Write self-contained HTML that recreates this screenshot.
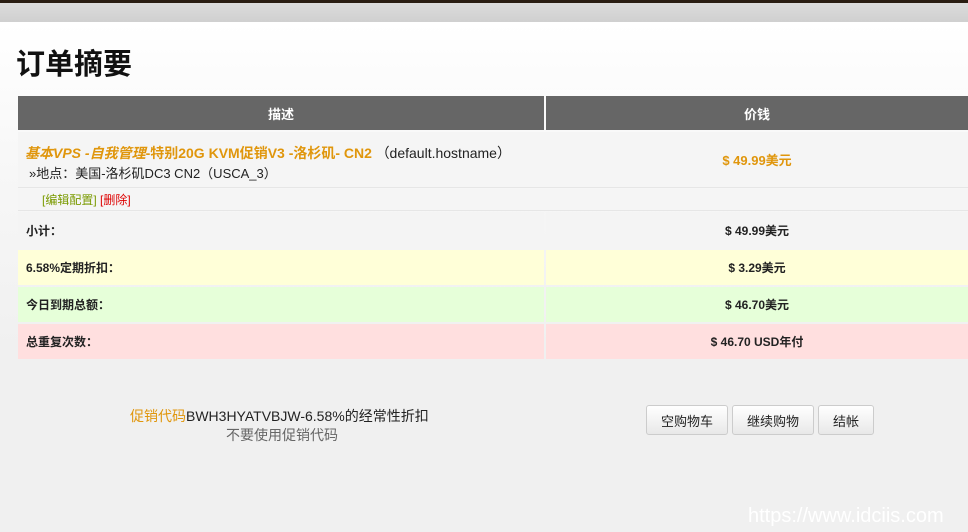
<!DOCTYPE html>
<html><head><meta charset="utf-8"><style>
*{margin:0;padding:0;box-sizing:border-box}
body{width:968px;height:532px;overflow:hidden;background:#f0f0f0;font-family:"Liberation Sans","Noto Sans CJK SC",sans-serif;font-size:13px;color:#222;position:relative}
.top{position:absolute;left:0;top:0;width:968px;height:3px;background:#2a1d12}
.band{position:absolute;left:0;top:3px;width:968px;height:20px;background:linear-gradient(#dcdcdc,#cfcfcf)}
.panel{position:absolute;left:0;top:22px;width:968px;height:510px;background:linear-gradient(#fff 0,#f7f7f7 150px,#f0f0f0 330px,#f0f0f0)}
h1{position:absolute;left:16px;top:41px;font-size:29px;font-weight:bold;color:#111}
.row{position:absolute;left:18px;width:950px;display:flex}
.row>div{display:flex;align-items:center;height:100%}
.c1{width:526px}.c2{width:422px;margin-left:2px;justify-content:center}
.hd{top:96px;height:34px;color:#fff;font-weight:bold;font-size:13px}
.hd>div{background:#666}
.hd .c1{justify-content:center}
.b{font-weight:bold;font-size:12px}
.lab{padding-left:8px}
.or{color:#e0960c}
.y>div{background:#ffffd8}.g>div{background:#e6ffd9}.r>div{background:#ffdfdf}.s>div{background:#f4f4f4}
</style></head><body>
<div class="top"></div><div class="band"></div><div class="panel"></div>
<h1>订单摘要</h1>
<div class="row hd"><div class="c1">描述</div><div class="c2">价钱</div></div>
<div class="row" style="top:132px;height:56px;background:#f5f5f5;border-bottom:1px solid #e6e6e6">
 <div class="c1" style="display:block;padding:11px 0 0 7px;line-height:20px">
  <span class="or" style="font-weight:bold;font-size:14px"><i>基本VPS -自我管理</i>-特别20G KVM促销V3 -洛杉矶- CN2</span> <span style="font-size:14px">（default.hostname）</span><br>
  <span style="padding-left:4px;font-size:13px">»地点：美国-洛杉矶DC3 CN2（USCA_3）</span></div>
 <div class="c2 or" style="font-weight:bold;font-size:13px">$ 49.99美元</div></div>
<div class="row" style="top:189px;height:22px;background:#f5f5f5;border-bottom:1px solid #e6e6e6">
 <div class="c1" style="padding-left:24px;font-size:12px"><span style="color:#7a9a00">[编辑配置]</span>&nbsp;<span style="color:#d00">[删除]</span></div></div>
<div class="row b s" style="top:212px;height:36px"><div class="c1 lab">小计：</div><div class="c2">$ 49.99美元</div></div>
<div class="row b y" style="top:250px;height:35px"><div class="c1 lab">6.58%定期折扣：</div><div class="c2">$ 3.29美元</div></div>
<div class="row b g" style="top:287px;height:35px"><div class="c1 lab">今日到期总额：</div><div class="c2">$ 46.70美元</div></div>
<div class="row b r" style="top:324px;height:35px"><div class="c1 lab">总重复次数：</div><div class="c2">$ 46.70 USD年付</div></div>
<div style="position:absolute;left:130px;top:406px;font-size:14px"><span class="or">促销代码</span>BWH3HYATVBJW-6.58%的经常性折扣</div>
<div style="position:absolute;left:226px;top:425px;font-size:14px;color:#666">不要使用促销代码</div>
<div style="position:absolute;left:646px;top:405px;display:flex;gap:4px;font-size:13px">
 <div style="width:82px;height:30px;border:1px solid #ccc;border-radius:3px;background:linear-gradient(#fff,#e8e8e8);display:flex;align-items:center;justify-content:center">空购物车</div>
 <div style="width:82px;height:30px;border:1px solid #ccc;border-radius:3px;background:linear-gradient(#fff,#e8e8e8);display:flex;align-items:center;justify-content:center">继续购物</div>
 <div style="width:56px;height:30px;border:1px solid #ccc;border-radius:3px;background:linear-gradient(#fff,#e8e8e8);display:flex;align-items:center;justify-content:center">结帐</div>
</div>
<div style="position:absolute;left:748px;top:505px;font-size:20px;color:#fff">https://www.idciis.com</div>
</body></html>
